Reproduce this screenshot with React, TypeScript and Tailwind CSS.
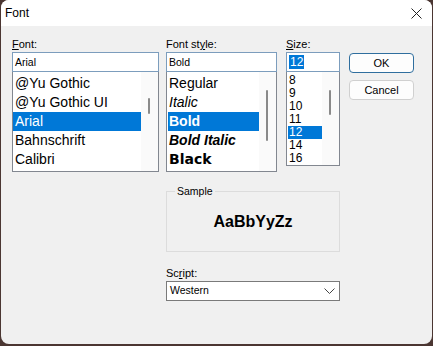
import { ReactNode } from "react";

const fontNames = ["@Yu Gothic", "@Yu Gothic UI", "Arial", "Bahnschrift", "Calibri"];
const styles = [
  { name: "Regular", cls: "" },
  { name: "Italic", cls: "italic" },
  { name: "Bold", cls: "font-bold" },
  { name: "Bold Italic", cls: "font-bold italic" },
  { name: "Black", cls: "font-bold font-['DejaVu_Sans',sans-serif]" },
];
const sizes = ["8", "9", "10", "11", "12", "14", "16"];

function Label({ children }: { children: ReactNode }) {
  return <div className="h-[16px] text-[11px] leading-[16px] text-black">{children}</div>;
}

function Scroll({ thumb }: { thumb: string }) {
  return (
    <div className="relative w-[17px] shrink-0 bg-[#fafafa]">
      <div className={`absolute left-[7px] w-[2px] rounded-full bg-[#8a8a8a] ${thumb}`} />
    </div>
  );
}

export default function App() {
  return (
    <div className="h-[346px] w-[433px] bg-[#4b3632] pl-[1px]" style={{ fontFamily: '"Liberation Sans", Arial, sans-serif' }}>
      <div className="flex h-[344px] w-[431px] flex-col overflow-hidden rounded-[8px] bg-[#f0f0f0]">
        {/* title bar */}
        <div className="flex h-[26px] shrink-0 items-center justify-between bg-white pl-[4px] pr-[10px]">
          <span className="text-[12px] text-black">Font</span>
          <svg width="11" height="11" viewBox="0 0 11 11" className="mt-[1px]">
            <path d="M0.5 0.5 L10.5 10.5 M10.5 0.5 L0.5 10.5" stroke="#222" strokeWidth="1" />
          </svg>
        </div>

        <div className="flex pl-[11px] pt-[10px]">
          {/* font name column */}
          <div className="flex w-[147px] flex-col">
            <Label>
              <span className="underline">F</span>ont:
            </Label>
            <div className="h-[20px] border border-[#7c9dbd] bg-white pl-[2px] text-[10.5px] leading-[18px]">Arial</div>
            <div className="flex h-[100px] border border-t-0 border-[#828790] bg-white">
              <div className="flex-1 pt-[2px]">
                {fontNames.map((f) => (
                  <div
                    key={f}
                    className={`h-[19px] pl-[2px] text-[14px] leading-[19px] ${f === "Arial" ? "bg-[#0078d7] text-white" : "text-black"}`}
                  >
                    {f}
                  </div>
                ))}
              </div>
              <Scroll thumb="top-[26px] h-[16px]" />
            </div>
          </div>

          {/* middle */}
          <div className="ml-[7px] flex w-[174px] flex-col">
            <div className="flex gap-[9px]">
              <div className="flex w-[111px] flex-col">
                <Label>
                  Font st<span className="underline">y</span>le:
                </Label>
                <div className="h-[20px] border border-[#7c9dbd] bg-white pl-[2px] text-[10.5px] leading-[18px]">Bold</div>
                <div className="flex h-[100px] border border-t-0 border-[#828790] bg-white">
                  <div className="flex-1 pt-[2px] pl-[1px]">
                    {styles.map((s) => (
                      <div
                        key={s.name}
                        className={`h-[19px] pl-[1px] text-[14px] leading-[19px] ${s.cls} ${s.name === "Bold" ? "bg-[#0078d7] text-white" : "text-black"}`}
                      >
                        {s.name}
                      </div>
                    ))}
                  </div>
                  <Scroll thumb="top-[18px] h-[51px]" />
                </div>
              </div>

              <div className="flex w-[54px] flex-col">
                <Label>
                  <span className="underline">S</span>ize:
                </Label>
                <div className="flex h-[20px] items-center border border-[#7c9dbd] bg-white pl-[2px]">
                  <span className="bg-[#0078d7] px-[1px] text-[12px] leading-[14px] text-white">12</span>
                </div>
                <div className="flex h-[94px] border border-t-0 border-[#828790] bg-white">
                  <div className="flex-1 pt-[2px] pl-[1px]">
                    {sizes.map((s) => (
                      <div
                        key={s}
                        className={`h-[13px] pl-[1px] text-[12px] leading-[13px] ${s === "12" ? "bg-[#0078d7] text-white" : "text-black"}`}
                      >
                        {s}
                      </div>
                    ))}
                  </div>
                  <Scroll thumb="top-[18px] h-[25px]" />
                </div>
              </div>
            </div>

            <fieldset className="mt-[13px] h-[67px] border border-[#dcdcdc] px-[8px]">
              <legend className="px-[2px] text-[10.5px] leading-[12px] text-black">Sample</legend>
              <div className="flex h-[50px] items-center justify-center text-[16px] font-bold text-black">AaBbYyZz</div>
            </fieldset>

            <div className="mt-[13px]">
              <Label>
                Sc<span className="underline">r</span>ipt:
              </Label>
            </div>
            <div className="flex h-[20px] items-center justify-between border border-[#7a7a7a] bg-white pl-[3px] pr-[4px]">
              <span className="text-[10.5px] text-black">Western</span>
              <svg width="11" height="6" viewBox="0 0 11 6">
                <path d="M0.5 0.5 L5.5 5.5 L10.5 0.5" fill="none" stroke="#444" strokeWidth="1" />
              </svg>
            </div>
          </div>

          {/* buttons */}
          <div className="ml-[9px] flex w-[65px] flex-col gap-[7px] pt-[17px]">
            <button className="h-[20px] rounded-[4px] border border-[#2f6e9e] bg-[#fdfdfd] text-[11px] text-black">OK</button>
            <button className="h-[20px] rounded-[4px] border border-[#d0d0d0] bg-[#fdfdfd] text-[11px] text-black">Cancel</button>
          </div>
        </div>
      </div>
    </div>
  );
}
